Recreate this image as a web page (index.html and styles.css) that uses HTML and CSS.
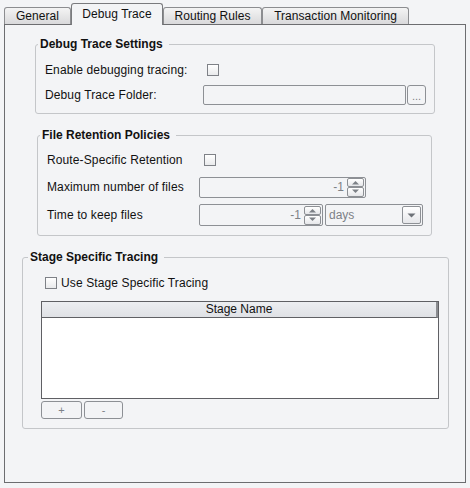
FILE: index.html
```html
<!DOCTYPE html>
<html>
<head>
<meta charset="utf-8">
<link rel="stylesheet" href="styles.css">
</head>
<body>
<div class="tabs">
  <div class="tab t-general">General</div>
  <div class="tab tab-active t-debug">Debug Trace</div>
  <div class="tab t-routing">Routing Rules</div>
  <div class="tab t-trans">Transaction Monitoring</div>
</div>
<div class="panel">
  <fieldset class="group g1">
    <legend>Debug Trace Settings</legend>
    <div class="row">
      <span class="label lab1">Enable debugging tracing:</span>
      <span class="check ck1"></span>
    </div>
    <div class="row row-gap1">
      <span class="label lab1">Debug Trace Folder:</span>
      <span class="field folder"></span>
      <span class="btn dots">...</span>
    </div>
  </fieldset>

  <fieldset class="group g2">
    <legend>File Retention Policies</legend>
    <div class="row">
      <span class="label lab2">Route-Specific Retention</span>
      <span class="check ck2"></span>
    </div>
    <div class="row row-spin r2">
      <span class="label lab2">Maximum number of files</span>
      <span class="field spin spin-wide">
        <span class="val">-1</span>
        <span class="arrows">
          <span class="arr"><svg width="9" height="5" viewBox="0 0 9 5"><path d="M1 4.5 L4.5 1 L8 4.5 Z" fill="#7d8187"/></svg></span>
          <span class="arr"><svg width="9" height="5" viewBox="0 0 9 5"><path d="M1 0.5 L4.5 4 L8 0.5 Z" fill="#7d8187"/></svg></span>
        </span>
      </span>
    </div>
    <div class="row row-spin r3">
      <span class="label lab2">Time to keep files</span>
      <span class="field spin spin-narrow">
        <span class="val">-1</span>
        <span class="arrows">
          <span class="arr"><svg width="9" height="5" viewBox="0 0 9 5"><path d="M1 4.5 L4.5 1 L8 4.5 Z" fill="#7d8187"/></svg></span>
          <span class="arr"><svg width="9" height="5" viewBox="0 0 9 5"><path d="M1 0.5 L4.5 4 L8 0.5 Z" fill="#7d8187"/></svg></span>
        </span>
      </span>
      <span class="field combo">
        <span class="combo-val">days</span>
        <span class="combo-btn"><svg width="9" height="5" viewBox="0 0 9 5"><path d="M0.5 0.5 L4.5 4.5 L8.5 0.5 Z" fill="#6e7278"/></svg></span>
      </span>
    </div>
  </fieldset>

  <fieldset class="group g3">
    <legend>Stage Specific Tracing</legend>
    <div class="row use-row">
      <span class="check ck3"></span>
      <span class="use-label">Use Stage Specific Tracing</span>
    </div>
    <div class="table">
      <div class="thead">Stage Name</div>
      <div class="tbody"></div>
    </div>
    <div class="btns">
      <span class="btn small plus">+</span>
      <span class="btn small minus">-</span>
    </div>
  </fieldset>
</div>
</body>
</html>
```

FILE: styles.css
```css
html, body {
  margin: 0;
  padding: 0;
  background: #f3f4f6;
}
body {
  width: 470px;
  height: 488px;
  font-family: "Liberation Sans", Arial, sans-serif;
  font-size: 12px;
  color: #111;
  overflow: hidden;
}

/* tabs */
.tabs {
  display: flex;
  align-items: flex-end;
  height: 24px;
  padding-left: 4px;
  box-sizing: border-box;
}
.tab {
  box-sizing: border-box;
  height: 17px;
  border: 1px solid #8c8d90;
  border-bottom: none;
  border-radius: 3px 3px 0 0;
  background: linear-gradient(#f4f4f4, #d9d9db);
  text-align: center;
  line-height: 17px;
  color: #111;
  letter-spacing: 0.05px;
}
.t-general { width: 67px; }
.t-debug { width: 92px; }
.t-routing { width: 99px; }
.t-trans { width: 147px; }
.tab-active {
  height: 22px;
  margin-bottom: -1px;
  background: #f3f4f6;
  line-height: 20px;
  position: relative;
  z-index: 1;
  border-color: #7a7b7e;
}

/* panel */
.panel {
  margin-left: 4px;
  width: 462px;
  height: 459px;
  box-sizing: border-box;
  border: 1px solid #6c6d70;
  background: #f3f4f6;
  overflow: hidden;
}

/* groups */
.group {
  box-sizing: border-box;
  border: 1px solid #c4c6c9;
  border-radius: 3px;
  margin: 0;
  padding: 0 9px;
  min-width: 0;
}
.group legend {
  font-weight: bold;
  line-height: 14px;
  padding: 0 6px 0 2px;
  margin-left: -7px;
  color: #111;
}
.g1 {
  margin: 12px 0 0 30px;
  width: 400px;
  padding-top: 9px;
  padding-bottom: 8px;
}
.g2 {
  margin: 14px 0 0 32px;
  width: 395px;
  padding-top: 8px;
  padding-bottom: 9px;
}
.g3 {
  margin: 14px 0 0 17px;
  width: 427px;
  padding-top: 9px;
  padding-bottom: 9px;
}
.g3 legend { margin-left: -4px; }

.row {
  display: flex;
  align-items: center;
  height: 20px;
}
.row-gap1 { margin-top: 5px; }
.label { flex: none; letter-spacing: 0.12px; }
.lab1 { width: 158px; }
.lab2 { width: 152px; }

.check {
  box-sizing: border-box;
  width: 12px;
  height: 12px;
  border: 1px solid #7e8187;
  background: linear-gradient(#ffffff, #e9eaec);
  flex: none;
}
.ck1 { margin-left: 4px; }
.ck2 { margin-left: 5px; }

.field {
  box-sizing: border-box;
  border: 1px solid #8d9095;
  border-radius: 2px;
  background: #f3f4f6;
  flex: none;
}
.folder {
  width: 203px;
  height: 20px;
}
.btn {
  box-sizing: border-box;
  border: 1px solid #8d9095;
  border-radius: 3px;
  background: #f3f4f6;
  color: #7d8187;
  text-align: center;
  flex: none;
}
.dots {
  width: 19px;
  height: 20px;
  margin-left: 1px;
  line-height: 20px;
  font-size: 11px;
}

.r2 { margin-top: 6px; height: 22px; }
.r3 { margin-top: 6px; height: 22px; }
.spin {
  display: flex;
  align-items: center;
  height: 21px;
  padding-right: 1px;
}
.spin-wide { width: 167px; }
.spin-narrow { width: 124px; }
.r3 .spin { height: 22px; }
.val {
  flex: 1;
  text-align: right;
  color: #7d8187;
  padding-right: 3px;
}
.arrows {
  display: flex;
  flex-direction: column;
  width: 17px;
  height: 19px;
}
.arr {
  box-sizing: border-box;
  flex: 1;
  border: 1px solid #8d9095;
  border-radius: 2px;
  display: flex;
  align-items: center;
  justify-content: center;
  background: linear-gradient(#ffffff, #e6e7ea);
}
.combo {
  width: 98px;
  height: 22px;
  margin-left: 2px;
  display: flex;
  align-items: center;
}
.combo-val {
  flex: 1;
  color: #7d8187;
  padding-left: 3px;
}
.combo-btn {
  box-sizing: border-box;
  width: 19px;
  height: 18px;
  margin-right: 1px;
  border: 1px solid #8d9095;
  border-radius: 2px;
  display: flex;
  align-items: center;
  justify-content: center;
  background: linear-gradient(#ffffff, #e6e7ea);
}

/* stage tracing */
.use-row { padding-left: 13px; }
.use-label { margin-left: 4px; letter-spacing: 0.12px; }
.table {
  box-sizing: border-box;
  margin-top: 8px;
  margin-left: 9px;
  width: 398px;
  height: 98px;
  border: 1px solid #5f6064;
  display: flex;
  flex-direction: column;
}
.thead {
  box-sizing: border-box;
  height: 16px;
  line-height: 15px;
  text-align: center;
  background: linear-gradient(#eceef1, #dfe1e5);
  border-bottom: 1px solid #5f6064;
  border-right: 2px solid #8a8c90;
  color: #111;
}
.tbody {
  flex: 1;
  background: #ffffff;
}
.btns {
  display: flex;
  margin-top: 2px;
  margin-left: 9px;
  gap: 2px;
}
.small {
  height: 18px;
  line-height: 16px;
  font-size: 11px;
}
.plus { width: 41px; }
.minus { width: 39px; }
```
